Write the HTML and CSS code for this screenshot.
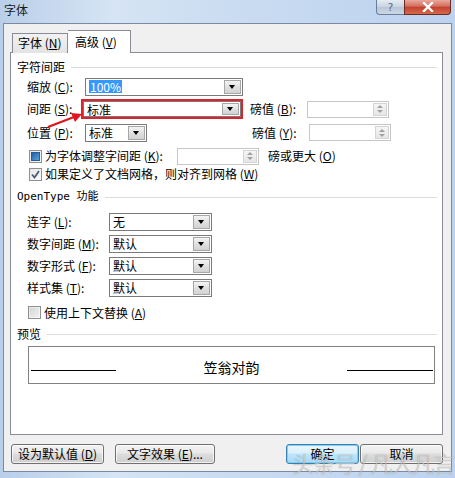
FILE: index.html
```html
<!DOCTYPE html>
<html lang="zh-CN">
<head>
<meta charset="utf-8">
<title>字体</title>
<link rel="stylesheet" href="styles.css">
</head>
<body>
<div class="window">
  <div class="titlebar">
    <span class="title">字体</span>
    <div class="caption-btns">
      <span class="cbtn help">?</span>
      <span class="cbtn close">
        <svg width="14" height="10" viewBox="0 0 14 10"><path d="M3 1 L11 9 M11 1 L3 9" stroke="#fff" stroke-width="2.4" stroke-linecap="square"/></svg>
      </span>
    </div>
  </div>
  <div class="client">
    <div class="tabs">
      <div class="tab">字体 (<u>N</u>)</div>
      <div class="tab active">高级 (<u>V</u>)</div>
    </div>
    <div class="panel">
      <div class="group-title g1"><span>字符间距</span><i class="rule"></i></div>

      <div class="row r1">
        <span class="lbl l58">缩放 (<u>C</u>):</span>
        <div class="combo w158"><span class="val"><span class="sel">100%</span></span><span class="dd"></span></div>
      </div>

      <div class="row r2">
        <span class="lbl l56">间距 (<u>S</u>):</span>
        <div class="redbox">
          <div class="combo w158 short"><span class="val">标准</span><span class="dd"></span></div>
        </div>
        <span class="lbl lpt">磅值 (<u>B</u>):</span>
        <div class="spin"><span class="spinbtn"><b class="up"></b><b class="down"></b></span></div>
      </div>

      <div class="row r3">
        <span class="lbl l58">位置 (<u>P</u>):</span>
        <div class="combo w62"><span class="val">标准</span><span class="dd"></span></div>
        <span class="lbl lpt gap105">磅值 (<u>Y</u>):</span>
        <div class="spin"><span class="spinbtn"><b class="up"></b><b class="down"></b></span></div>
      </div>

      <div class="row r4">
        <span class="chk indet"><i></i></span>
        <span class="lbl ltxt">为字体调整字间距 (<u>K</u>):</span>
        <div class="spin"><span class="spinbtn"><b class="up"></b><b class="down"></b></span></div>
        <span class="lbl after">磅或更大 (<u>O</u>)</span>
      </div>

      <div class="row r5">
        <span class="chk checked">
          <svg width="11" height="11" viewBox="0 0 11 11"><path d="M2 5.5 L4.5 8.5 L9 2" fill="none" stroke="#4a5a78" stroke-width="1.8"/></svg>
        </span>
        <span class="lbl ltxt2">如果定义了文档网格，则对齐到网格 (<u>W</u>)</span>
      </div>

      <div class="group-title g2"><span class="ot">OpenType 功能</span><i class="rule"></i></div>

      <div class="row ro first">
        <span class="lbl l82">连字 (<u>L</u>):</span>
        <div class="combo w103"><span class="val">无</span><span class="dd"></span></div>
      </div>
      <div class="row ro">
        <span class="lbl l82">数字间距 (<u>M</u>):</span>
        <div class="combo w103"><span class="val">默认</span><span class="dd"></span></div>
      </div>
      <div class="row ro">
        <span class="lbl l82">数字形式 (<u>F</u>):</span>
        <div class="combo w103"><span class="val">默认</span><span class="dd"></span></div>
      </div>
      <div class="row ro">
        <span class="lbl l82">样式集 (<u>T</u>):</span>
        <div class="combo w103"><span class="val">默认</span><span class="dd"></span></div>
      </div>

      <div class="row r6">
        <span class="chk plain"><i></i></span>
        <span class="lbl ltxt2">使用上下文替换 (<u>A</u>)</span>
      </div>

      <div class="group-title g3"><span>预览</span><i class="rule"></i></div>

      <div class="preview">
        <i class="pline"></i>
        <span class="ptext">笠翁对韵</span>
        <i class="pline"></i>
      </div>
    </div>

    <div class="btnbar">
      <span class="btn b1">设为默认值 (<u>D</u>)</span>
      <span class="btn b2">文字效果 (<u>E</u>)...</span>
      <span class="btn b3 default">确定</span>
      <span class="btn b4">取消</span>
    </div>
  </div>

  <svg class="arrow" width="455" height="478" viewBox="0 0 455 478">
    <path d="M48 127 L74 117" stroke="#e0141e" stroke-width="2.2" fill="none"/>
    <path d="M82 114 L71 113 L75 122 Z" fill="#e0141e"/>
  </svg>

  <div class="watermark">头条号 / 凡人凡言</div>
</div>
</body>
</html>
```
FILE: styles.css
```css
* { box-sizing: border-box; }
html, body { margin: 0; padding: 0; }
body {
  width: 455px;
  height: 478px;
  overflow: hidden;
  font-family: "Noto Sans CJK SC", "Noto Sans", sans-serif;
  font-size: 12px;
  color: #000;
}
u { text-decoration: underline; text-underline-offset: 1px; }

.window {
  position: relative;
  width: 455px;
  height: 478px;
  background: linear-gradient(90deg, #b9cfe9 0%, #d6e4f4 25%, #c8dbf1 55%, #bcd2ee 100%);
  padding: 0 3px 0 3px;
  display: flex;
  flex-direction: column;
}

.titlebar {
  height: 23px;
  display: flex;
  align-items: flex-start;
}
.title {
  margin-top: 2px;
  margin-left: 1px;
  font-size: 12px;
  line-height: 16px;
  color: #1a1a1a;
}
.caption-btns {
  margin-left: auto;
  display: flex;
  margin-right: 1px;
}
.cbtn {
  height: 15px;
  display: flex;
  align-items: center;
  justify-content: center;
  border: 1px solid #6a7d96;
  border-top: none;
}
.help {
  width: 28px;
  border-radius: 0 0 0 4px;
  border-right: none;
  background: linear-gradient(#e4ebf3, #c9d4e1 50%, #b7c5d6 51%, #cdd8e6);
  color: #5a6a80;
  font-family: "DejaVu Sans", sans-serif;
  font-size: 11px;
  line-height: 13px;
}
.close {
  width: 47px;
  border-radius: 0 0 4px 0;
  border-color: #6b2a22;
  background: linear-gradient(#e9a99c, #d46d5e 45%, #c2412f 50%, #d66a4a);
}

.client {
  flex: 1;
  margin-bottom: 6px;
  background: #f0f0f0;
  border: 1px solid #7b8aa0;
  padding: 6px 0 0 6px;
  display: flex;
  flex-direction: column;
}

.tabs {
  display: flex;
  align-items: flex-end;
  height: 23px;
  padding-left: 2px;
  margin-bottom: -1px;
  position: relative;
  z-index: 1;
}
.tab {
  height: 20px;
  width: 56px;
  border: 1px solid #898c95;
  border-bottom: none;
  background: linear-gradient(#f2f2f2, #e3e3e3);
  line-height: 18px;
  padding-left: 5px;
  color: #000;
}
.tab.active {
  height: 23px;
  width: 63px;
  background: #fff;
  border-left: none;
  padding-left: 7px;
  line-height: 22px;
}

.panel {
  width: 433px;
  height: 383px;
  background: #fff;
  border: 1px solid #898c95;
  padding-left: 6px;
  display: flex;
  flex-direction: column;
}

.group-title {
  height: 14px;
  display: flex;
  align-items: center;
  line-height: 14px;
  padding-right: 5px;
}
.group-title .rule {
  flex: 1;
  height: 1px;
  background: #dcdcdc;
  margin-left: 6px;
}
.group-title .ot { font-family: "DejaVu Sans Mono", "Noto Sans CJK SC", monospace; font-size: 11px; }
.g1 { margin-top: 7px; }
.g2 { margin-top: 9px; }
.g3 { margin-top: 7px; }

.row {
  display: flex;
  align-items: center;
  padding-left: 10px;
}
.r1 { margin-top: 3px; height: 19px; }
.r2 { margin-top: 3px; height: 20px; }
.r3 { margin-top: 4px; height: 19px; }
.r4 { margin-top: 5px; height: 18px; }
.r5 { margin-top: 2px; height: 14px; }
.ro { margin-top: 3px; height: 19px; }
.ro.first { margin-top: 8px; }
.r6 { margin-top: 8px; height: 15px; }

.lbl { white-space: nowrap; line-height: 14px; }
.l58 { width: 58px; }
.l56 { width: 56px; }
.l82 { width: 82px; }
.lpt { width: 57px; margin-left: 7px; }
.gap105 { margin-left: 105px; }
.ltxt { width: 132px; margin-left: 3px; }
.ltxt2 { margin-left: 3px; }
.after { margin-left: 9px; }

.combo {
  height: 18px;
  border: 1px solid #7a7a7a;
  background: #fff;
  display: flex;
  align-items: stretch;
}
.combo.short { height: 16px; }
.w158 { width: 158px; }
.w62 { width: 62px; }
.w103 { width: 103px; }
.combo .val {
  flex: 1;
  padding-left: 3px;
  line-height: 15px;
  display: flex;
  align-items: center;
}
.combo .sel {
  background: #3399ff;
  color: #fff;
  padding: 0 1px;
  line-height: 13px;
}
.combo .dd {
  width: 17px;
  margin: 1px;
  border: 1px solid #a7a7a7;
  background: linear-gradient(#f4f4f4, #e0e0e0 50%, #d2d2d2);
  position: relative;
}
.combo .dd::after {
  content: "";
  position: absolute;
  left: 4px;
  top: 50%;
  margin-top: -2px;
  border-left: 3.5px solid transparent;
  border-right: 3.5px solid transparent;
  border-top: 4px solid #000;
}

.redbox {
  border: 2px solid #e2202a;
  margin-left: -2px;
  height: 20px;
}

.spin {
  width: 82px;
  height: 17px;
  border: 1px solid #c6c6c6;
  background: #fff;
  display: flex;
  justify-content: flex-end;
}
.spinbtn {
  width: 14px;
  margin: 1px;
  border: 1px solid #d4d4d4;
  background: linear-gradient(#f5f5f5, #e6e6e6);
  display: flex;
  flex-direction: column;
  align-items: center;
  justify-content: center;
  gap: 2px;
}
.spinbtn b { width: 0; height: 0; border-left: 3px solid transparent; border-right: 3px solid transparent; }
.spinbtn .up { border-bottom: 3px solid #a0a0a0; }
.spinbtn .down { border-top: 3px solid #a0a0a0; }

.chk {
  width: 13px;
  height: 13px;
  margin-left: 2px;
  border: 1px solid #8e8f8f;
  background: linear-gradient(135deg, #e6e6e6, #fbfbfb);
  display: flex;
  align-items: center;
  justify-content: center;
}
.chk.indet i {
  width: 9px;
  height: 9px;
  background: linear-gradient(135deg, #1f5fa8, #5aa2dc);
  border: 1px solid #2a5b94;
}
.chk.plain { margin-left: 1px; }
.chk.plain i { width: 9px; height: 9px; background: linear-gradient(135deg, #d6d6d6, #f0f0f0); }

.preview {
  margin-top: 5px;
  margin-left: 11px;
  width: 407px;
  height: 38px;
  border: 1px solid #828282;
  display: grid;
  grid-template-columns: 85px 1fr 86px;
  align-items: center;
  padding: 0 1px 0 2px;
}
.pline { height: 1px; background: #000; margin-top: 10px; }
.ptext { text-align: center; font-size: 14px; line-height: 16px; margin-top: 3px; }

.btnbar {
  margin-top: 9px;
  display: flex;
  align-items: center;
  padding-left: 1px;
}
.btn {
  height: 20px;
  border: 1px solid #707070;
  border-radius: 3px;
  background: linear-gradient(#f3f3f3, #e9e9e9 45%, #dcdcdc 50%, #cfcfcf);
  display: flex;
  align-items: center;
  justify-content: center;
  line-height: 14px;
  box-shadow: inset 0 0 0 1px rgba(255,255,255,0.7);
}
.b1 { width: 93px; }
.b2 { width: 100px; margin-left: 11px; }
.b3 { width: 73px; margin-left: 71px; }
.b4 { width: 83px; margin-left: 1px; }
.btn.default {
  border-color: #3c7fb1;
  background: linear-gradient(#eaf6fd, #d9f0fc 45%, #bee6fd 50%, #a7d9f5);
  box-shadow: inset 0 0 0 1px #7fd0f5;
}

.arrow {
  position: absolute;
  left: 0;
  top: 0;
  pointer-events: none;
}

.watermark {
  position: absolute;
  left: 292px;
  top: 449px;
  font-size: 22px;
  line-height: 26px;
  font-weight: 300;
  color: rgba(255,255,255,0.55);
  text-shadow: 0 0 1px rgba(90,90,90,0.7);
  letter-spacing: -1px;
  white-space: nowrap;
  pointer-events: none;
}
```
